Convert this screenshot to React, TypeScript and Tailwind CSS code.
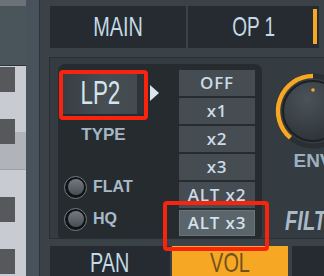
import React from "react";

const buttons = ["OFF", "x1", "x2", "x3", "ALT x2", "ALT x3"];

function Radio({ label }: { label: string }) {
    return (
        <div className="flex items-center gap-[6px]">
            <div className="w-[23px] h-[23px] rounded-full bg-[#101214] border border-[#737b81] flex items-center justify-center">
                <div className="w-[16px] h-[16px] rounded-full bg-linear-to-b from-[#737b80] to-[#484f54]" />
            </div>
            <span className="text-[16px] leading-none font-bold text-[#a9bac7]">{label}</span>
        </div>
    );
}

function Knob() {
    return (
        <svg width="80" height="80" viewBox="0 0 80 80" className="shrink-0">
            <defs>
                <radialGradient id="knobBody" cx="40%" cy="30%" r="75%">
                    <stop offset="0%" stopColor="#4b535a" />
                    <stop offset="100%" stopColor="#2c3237" />
                </radialGradient>
            </defs>
            <circle cx="40" cy="40" r="35" fill="none" stroke="#2a2f34" strokeWidth="5" />
            <path d="M 17.5 66.8 A 35 35 0 0 1 40 5" fill="none" stroke="#f6a723" strokeWidth="4.5" />
            <circle cx="40" cy="40" r="30" fill="url(#knobBody)" stroke="#1c2024" strokeWidth="2" />
            <circle cx="40" cy="19" r="1.8" fill="#f6a723" />
        </svg>
    );
}

export default function App() {
    return (
        <div className="relative flex w-[324px] h-[276px] overflow-hidden bg-[#3a4147] font-['Liberation_Sans',Arial,sans-serif]">
            {/* piano strip */}
            <div className="w-[26px] shrink-0 flex flex-col">
                <div className="h-[6px] bg-[#6b7379]" />
                <div className="h-[60px] bg-[#4a545b] border-b border-[#2e353a]" />
                <div className="relative flex-1 flex flex-col bg-[#c8ccd2]">
                    <div className="h-[66px]" />
                    <div className="h-[38px] bg-[#b0b4ba] border-b border-[#9da1a7]" />
                    <div className="absolute left-0 top-[1px] w-[15px] h-[25px] bg-[#56585b]" />
                    <div className="absolute left-0 top-[53px] w-[15px] h-[25px] bg-[#56585b]" />
                    <div className="absolute left-0 top-[131px] w-[15px] h-[25px] bg-[#56585b]" />
                    <div className="absolute left-0 top-[183px] w-[15px] h-[25px] bg-[#56585b]" />
                </div>
            </div>
            <div className="w-[14px] shrink-0 bg-[#48525a] border-r border-[#2b3136]" />

            {/* main */}
            <div className="flex-1 flex flex-col">
                <div className="mt-[6px] ml-[10px] h-[44px] flex gap-[2px]">
                    <div className="w-[136px] bg-[#252b30] flex items-center justify-center">
                        <span className="inline-block text-[28px] leading-none text-[#c3d9e5] scale-x-[0.71]">MAIN</span>
                    </div>
                    <div className="w-[131px] bg-[#252b30] flex items-center pl-[6px] pr-[2px]">
                        <div className="flex-1 flex justify-center">
                            <span className="inline-block text-[28px] leading-none text-[#c3d9e5] scale-x-[0.68]">OP 1</span>
                        </div>
                        <div className="w-[4px] h-[35px] bg-[#f6a723]" />
                    </div>
                </div>

                <div className="mt-[9px] ml-[9px] h-[192px] flex border border-r-0 border-[#282e33] bg-[#343b41] overflow-hidden">
                    {/* dark panel */}
                    <div className="ml-[8px] mt-[6px] w-[204px] h-[177px] shrink-0 rounded-[7px] bg-[#262b30] flex">
                        <div className="w-[121px] flex flex-col">
                            <div className="mt-[8px] ml-[5px] flex items-center gap-[6px]">
                                <div className="w-[81px] h-[42px] flex bg-linear-to-r from-[#373d43] via-[#464d53] to-[#41484e]">
                                    <div className="flex-1 flex items-center justify-center">
                                        <span className="inline-block text-[33px] leading-none text-[#d3e5ee] scale-x-[0.68]">LP2</span>
                                    </div>
                                    <div className="w-[7px] bg-[#2d3338]" />
                                </div>
                                <svg width="9" height="16" viewBox="0 0 9 16">
                                    <path d="M0 0 L9 8 L0 16 Z" fill="#dbe7ee" />
                                </svg>
                            </div>
                            <div className="mt-[12px] ml-[5px] w-[81px] text-center text-[17px] leading-none font-bold text-[#a4b6c3]">
                                TYPE
                            </div>
                            <div className="mt-[33px] ml-[6px] flex flex-col gap-[9px]">
                                <Radio label="FLAT" />
                                <Radio label="HQ" />
                            </div>
                        </div>
                        <div className="w-[76px] mt-[6px] flex flex-col gap-[2px]">
                            {buttons.map(b => (
                                <div
                                    key={b}
                                    className={
                                        b === "ALT x3"
                                            ? "h-[26px] flex items-center justify-center bg-[#5a646b] border border-[#69737a] font-['Open_Sans',sans-serif] text-[17px] leading-none font-semibold tracking-[0.8px] text-[#d3e1ea]"
                                            : "h-[26px] flex items-center justify-center bg-[#454c52] font-['Open_Sans',sans-serif] text-[17px] leading-none font-semibold tracking-[0.8px] text-[#cbdae4]"
                                    }
                                >
                                    {b}
                                </div>
                            ))}
                        </div>
                    </div>

                    {/* knob column */}
                    <div className="ml-[11px] mt-[13px] w-[80px] shrink-0 flex flex-col">
                        <Knob />
                        <span className="w-[80px] text-center text-[19px] leading-none font-bold text-[#9cb0bf]">ENV</span>
                        <span className="mt-[37px] ml-[12px] w-[100px] origin-left scale-x-[0.72] text-[28px] leading-none italic font-bold text-[#a9b9c5]">
                            FILTER
                        </span>
                    </div>
                </div>

                <div className="mt-[7px] ml-[10px] h-[30px] flex">
                    <div className="w-[120px] bg-[#252b30] flex justify-center pt-[3px]">
                        <span className="inline-block text-[28px] leading-none text-[#c3d9e5] scale-x-[0.71]">PAN</span>
                    </div>
                    <div className="ml-[2px] w-[116px] bg-[#f6a824] flex justify-center pt-[3px]">
                        <span className="inline-block text-[28px] leading-none text-[#74501f] scale-x-[0.71]">VOL</span>
                    </div>
                    <div className="ml-[4px] flex-1 bg-[#252b30]" />
                </div>
            </div>

            {/* annotation boxes */}
            <div className="absolute left-[59px] top-[70px] w-[89px] h-[50px] border-4 border-[#f9240e] rounded-[4px]" />
            <div className="absolute left-[163px] top-[201px] w-[106px] h-[50px] border-4 border-[#f9240e] rounded-[4px]" />
        </div>
    );
}
